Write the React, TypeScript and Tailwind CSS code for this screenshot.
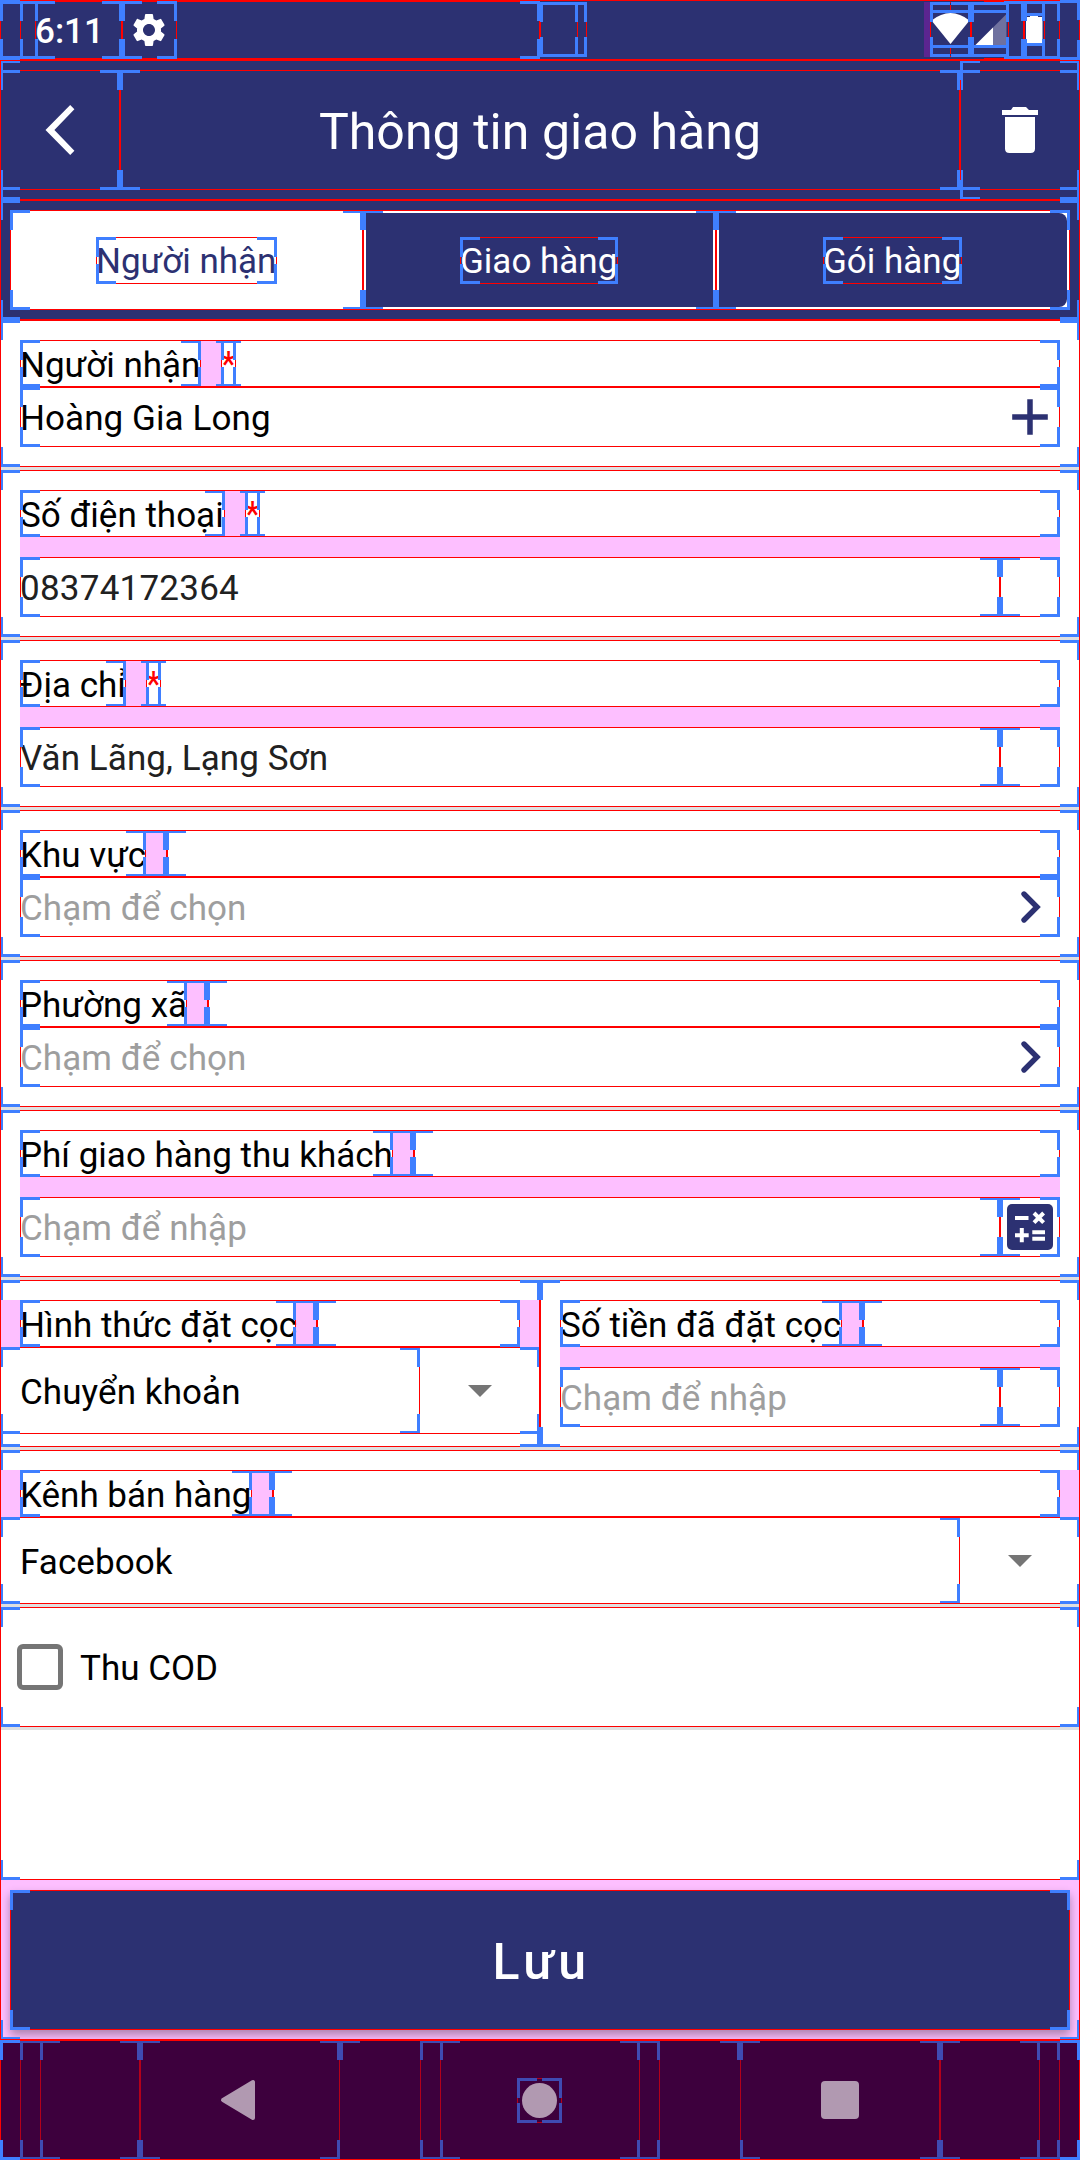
import React from "react";

type Tone = "bright" | "dim";

/** Debug outline: a hairline frame with heavy corner brackets. */
function Outline({ tone = "bright" }: { tone?: Tone }) {
  const c = tone === "bright" ? "border-[#3f7fff]" : "border-[#3f4bb2]";
  const r = tone === "bright" ? "border-[#ff0000]" : "border-[#b3001a]";
  return (
    <span className="pointer-events-none absolute inset-0">
      <span className={`absolute inset-0 border ${r}`} />
      <span className={`absolute left-0 top-0 h-5 w-5 border-l-3 border-t-3 ${c}`} />
      <span className={`absolute right-0 top-0 h-5 w-5 border-r-3 border-t-3 ${c}`} />
      <span className={`absolute bottom-0 left-0 h-5 w-5 border-b-3 border-l-3 ${c}`} />
      <span className={`absolute bottom-0 right-0 h-5 w-5 border-b-3 border-r-3 ${c}`} />
    </span>
  );
}

function Box({ className = "", tone, children }: { className?: string; tone?: Tone; children?: React.ReactNode }) {
  return (
    <div className={`relative ${className}`}>
      {children}
      <Outline tone={tone} />
    </div>
  );
}

function Divider() {
  return <div className="h-[3px] w-full shrink-0 bg-[#dfdfdf]" />;
}

function Label({ text, width, required }: { text: string; width: string; required?: boolean }) {
  return (
    <Box className="flex h-[47px] grow">
      <Box className={`h-[47px] shrink-0 whitespace-nowrap pt-0.5 leading-[47px] ${width}`}>{text}</Box>
      <div className="h-[47px] w-5 bg-[#fdbfff]" />
      <Box className={`h-[47px] leading-[49px] text-[#ff0000] ${required ? "w-[15px]" : "w-0"}`}>{required ? "*" : ""}</Box>
    </Box>
  );
}

function Chevron() {
  return (
    <svg className="h-[60px] w-[60px]" viewBox="0 0 60 60" fill="none" stroke="#2c3172" strokeWidth="5.4">
      <path d="M24 17 L37 30 L24 43" strokeLinecap="round" />
    </svg>
  );
}

function Plus() {
  return (
    <svg className="h-[60px] w-[60px]" viewBox="0 0 60 60" stroke="#2c3172" strokeWidth="5.5">
      <path d="M12.200 30 H47.800 M30 12.200 V47.800" />
    </svg>
  );
}

function Calculator() {
  return (
    <svg className="h-[60px] w-[60px]" viewBox="0 0 60 60">
      <rect x="7" y="7" width="46" height="46" rx="5" fill="#2c3172" />
      <path
        d="M15 21 H28.500 M15 38.200 H28.700 M21.800 31 V45.200 M32.300 35.200 H45 M32.300 41.700 H45 M34 16 L43.600 25.600 M43.600 16 L34 25.600"
        stroke="#fff"
        strokeWidth="4"
      />
    </svg>
  );
}

function PickerRow({ label, width, required, value, placeholder, icon }: { label: string; width: string; required?: boolean; value?: string; placeholder?: string; icon: React.ReactNode }) {
  return (
    <Box className="h-[147px] p-5">
      <div className="flex">
        <Label text={label} width={width} required={required} />
      </div>
      <Box className="flex h-[60px] items-center justify-between">
        <span className={`pt-0.5 tracking-[0.08px] ${value ? "text-black" : "text-[#9e9e9e]"}`}>{value ?? placeholder}</span>
        {icon}
      </Box>
    </Box>
  );
}

function InputRow({ label, width, required, value, placeholder, icon, spacing = "tracking-[0.08px]" }: { label: string; width: string; required?: boolean; value?: string; placeholder?: string; icon?: React.ReactNode; spacing?: string }) {
  return (
    <Box className="h-[167px] grow p-5">
      <div className="flex">
        <Label text={label} width={width} required={required} />
      </div>
      <div className="h-5 bg-[#fdbfff]" />
      <Box className="flex h-[60px]">
        <Box className={`flex h-[60px] grow items-center pt-0.5 ${spacing} ${value ? "text-[#212121]" : "text-[#9e9e9e]"}`}>{value ?? placeholder}</Box>
        <Box className="h-[60px] w-[60px]">{icon}</Box>
      </Box>
    </Box>
  );
}

function Spinner({ label, width, value }: { label: string; width: string; value: string }) {
  return (
    <>
      <div className="flex pt-5">
        <div className="w-5 bg-[#fdbfff]" />
        <Label text={label} width={width} />
        <div className="w-5 bg-[#fdbfff]" />
      </div>
      <Box className="flex h-[87px]">
        <Box className="flex grow items-center pl-5 pt-[3px] tracking-[0.08px]">{value}</Box>
        <div className="flex w-[120px] items-center justify-center">
          <svg className="h-3 w-6" viewBox="0 0 24 12">
            <path d="M0 0 H24 L12 12 Z" fill="#757575" />
          </svg>
        </div>
      </Box>
    </>
  );
}

function StatusBar() {
  return (
    <div className="relative flex h-[60px] shrink-0 items-center bg-[#2c3172]">
      <div className="w-[35px]" />
      <div className="w-[87px] pt-0.5 font-medium text-white">6:11</div>
      <svg className="ml-[7px] h-10 w-10" viewBox="0 0 24 24" fill="#fff">
        <path d="M19.14 12.94c.04-.3.06-.61.06-.94 0-.32-.02-.64-.07-.94l2.03-1.58a.49.49 0 0 0 .12-.61l-1.92-3.32a.488.488 0 0 0-.59-.22l-2.39.96c-.5-.38-1.03-.7-1.62-.94l-.36-2.54a.484.484 0 0 0-.48-.41h-3.84c-.24 0-.43.17-.47.41l-.36 2.54c-.59.24-1.13.57-1.62.94l-2.39-.96c-.22-.08-.47 0-.59.22L2.74 8.87c-.12.21-.08.47.12.61l2.03 1.58c-.05.3-.09.63-.09.94s.02.64.07.94l-2.03 1.58a.49.49 0 0 0-.12.61l1.92 3.32c.12.22.37.29.59.22l2.39-.96c.5.38 1.03.7 1.62.94l.36 2.54c.05.24.24.41.48.41h3.84c.24 0 .44-.17.47-.41l.36-2.54c.59-.24 1.13-.56 1.62-.94l2.39.96c.22.08.47 0 .59-.22l1.92-3.32c.12-.22.07-.47-.12-.61l-2.01-1.58zM12 15.6c-1.98 0-3.6-1.62-3.6-3.6s1.62-3.6 3.600-3.600 3.600 1.620 3.600 3.600-1.620 3.600-3.600 3.600z" />
      </svg>
      <div className="grow" />
      <div className="mt-[-1px] h-[55px] w-[6px] bg-[#5b2590]" />
      <svg className="h-[60px] w-[150px]" viewBox="930 0 150 60">
        <path d="M931.500 20.500 Q941 13 950.500 13 Q960 13 969.500 20.500 L950.500 44 Z" fill="#fff" />
        <path d="M975.500 45 L1006.500 14 V45 Z" fill="#6f719f" />
        <path d="M975.500 45 L993 27.500 V45 Z" fill="#fff" />
        <path d="M1026 17 H1030 V15 H1038 V17 H1042.500 V44 H1026 Z" fill="#fff" />
      </svg>

      <span className="absolute inset-0"><Outline /></span>
      <span className="absolute inset-x-0 bottom-px top-px">
        <span className="absolute inset-y-0 left-0 w-[540px]"><Outline /></span>
        <span className="absolute inset-y-0 left-5 w-5 overflow-hidden"><span className="absolute inset-y-0 left-0 w-20"><Outline /></span></span>
        <span className="absolute inset-y-0 left-[35px] w-[87px]"><Outline /></span>
        <span className="absolute inset-y-0 left-[122px] w-[55px]"><Outline /></span>
        <span className="absolute inset-y-0 left-[984px] w-10 overflow-hidden"><span className="absolute inset-y-0 right-0 w-20"><Outline /></span></span>
        <span className="absolute inset-y-0 left-[1024px] w-[21px]"><Outline /></span>
        <span className="absolute inset-y-0 left-[1040px] w-5 overflow-hidden"><span className="absolute inset-y-0 right-0 w-20"><Outline /></span></span>
      </span>
      <span className="absolute left-[540px] top-0.5 h-[55px] w-[47px]"><Outline /></span>
      <span className="absolute left-[540px] top-0.5 h-[55px] w-[38px]"><Outline /></span>
      <span className="absolute left-[950px] top-[5px] h-[5px] w-px bg-[#ff0000]" />
      <span className="absolute left-[950px] top-12 h-1.5 w-px bg-[#ff0000]" />
      <span className="absolute left-[930px] top-0.5 h-[55px] w-[41px]"><Outline /></span>
      <span className="absolute left-[971px] top-0.5 h-[55px] w-[38px]"><Outline /></span>
      <span className="absolute left-[933px] top-2.5 h-[38px] w-[73px] border-y-3 border-[#3f7fff]" />
      <span className="absolute left-[1026px] top-[13px] h-[33px] w-4 border-y-3 border-[#3f7fff]" />
    </div>
  );
}

function Header() {
  return (
    <Box className="flex h-[140px] shrink-0 items-center bg-[#2c3172] text-[50px] text-white">
      <Box className="flex h-[120px] w-[120px] items-center">
        <svg className="h-[120px] w-[120px]" viewBox="0 70 120 120">
          <path d="M70.200 105 L74.400 109.300 L54.400 130 L74.400 150.700 L70.200 155 L45.500 130 Z" fill="#fff" />
        </svg>
      </Box>
      <Box className="flex h-[120px] grow items-center justify-center pt-1 tracking-[0.05px]">Thông tin giao hàng</Box>
      <Box className="flex h-[140px] w-[120px] items-center">
        <svg className="h-[120px] w-[120px]" viewBox="960 70 120 120" fill="#fff">
          <path d="M1002 110 H1011 L1013 107 H1026 L1029 110 H1038 V115 H1002 Z" />
          <path d="M1005 117 H1035 V148.500 Q1035 153 1030.500 153 H1009.500 Q1005 153 1005 148.500 Z" />
        </svg>
        <span className="absolute inset-x-0 inset-y-2.5"><Outline /></span>
      </Box>
    </Box>
  );
}

function Tabs() {
  return (
    <Box className="h-[120px] shrink-0 bg-[#2c3172] p-2.5">
      <Box className="flex h-[100px]">
        <Box className="flex w-[353px] items-center justify-center bg-white text-[#2c3172]">
          <Box className="h-[47px] w-[181px] whitespace-nowrap leading-[49px]">Người nhận</Box>
        </Box>
        <Box className="flex w-[353px] bg-white p-[3px] text-white">
          <div className="flex grow items-center justify-center bg-[#2c3172] pr-px">
            <Box className="h-[47px] w-[158px] whitespace-nowrap leading-[49px]">Giao hàng</Box>
          </div>
        </Box>
        <Box className="flex w-[354px] bg-white p-[3px] text-white">
          <div className="flex grow items-center justify-center rounded-r-[8px] bg-[#2c3172] pr-px">
            <Box className="h-[47px] w-[139px] whitespace-nowrap leading-[49px]">Gói hàng</Box>
          </div>
        </Box>
      </Box>
    </Box>
  );
}

function NavBar() {
  return (
    <div className="relative flex h-[120px] shrink-0 bg-[#3d003d] px-5">
      <div className="w-5" />
      <Box tone="dim" className="w-[100px]" />
      <Box tone="dim" className="flex w-[200px] items-center justify-center pr-[5px]">
        <svg className="h-[42px] w-9" viewBox="0 0 36 42">
          <path d="M3 21 L33 3 V39 Z" fill="#b199b1" stroke="#b199b1" strokeWidth="4" strokeLinejoin="round" />
        </svg>
      </Box>
      <div className="w-20" />
      <Box tone="dim" className="flex w-60 justify-center">
        <Box tone="dim" className="flex w-[200px] items-center justify-center pr-px">
          <Box tone="dim" className="flex h-[45px] w-[45px] items-center justify-center">
            <div className="h-[35px] w-[35px] rounded-full bg-[#b199b1]" />
          </Box>
        </Box>
      </Box>
      <div className="w-20" />
      <Box tone="dim" className="flex w-[200px] items-center justify-center">
        <div className="h-[38px] w-[38px] rounded-[4px] bg-[#b199b1]" />
      </Box>
      <Box tone="dim" className="w-[100px]" />
      <span className="absolute inset-y-0 left-5 right-5"><Outline tone="dim" /></span>
      <span className="absolute left-[340px] top-0 h-5 w-5 border-l-3 border-t-3 border-[#3f4bb2]" />
      <span className="absolute left-[720px] top-0 h-5 w-5 border-r-3 border-t-3 border-[#3f4bb2]" />
      <Outline />
    </div>
  );
}

export default function App() {
  return (
    <div className="relative flex h-[2160px] w-[1080px] flex-col overflow-hidden bg-white font-['Roboto',sans-serif] text-[35px] leading-[41px] text-black">
      <StatusBar />
      <Header />
      <Tabs />
      <Box className="flex h-[1560px] shrink-0 flex-col">
        <PickerRow label="Người nhận" width="w-[181px]" required value="Hoàng Gia Long" icon={<Plus />} />
        <Divider />
        <div className="flex"><InputRow label="Số điện thoại" width="w-[205px]" required value="08374172364" spacing="tracking-[0.24px]" /></div>
        <Divider />
        <div className="flex"><InputRow label="Địa chỉ" width="w-[106px]" required value="Văn Lãng, Lạng Sơn" /></div>
        <Divider />
        <PickerRow label="Khu vực" width="w-[126px]" placeholder="Chạm để chọn" icon={<Chevron />} />
        <Divider />
        <PickerRow label="Phường xã" width="w-[167px]" placeholder="Chạm để chọn" icon={<Chevron />} />
        <Divider />
        <div className="flex"><InputRow label="Phí giao hàng thu khách" width="w-[373px]" placeholder="Chạm để nhập" icon={<Calculator />} /></div>
        <Divider />
        <div className="flex h-[167px]">
          <Box className="w-[540px]">
            <Spinner label="Hình thức đặt cọc" width="w-[276px]" value="Chuyển khoản" />
          </Box>
          <InputRow label="Số tiền đã đặt cọc" width="w-[282px]" placeholder="Chạm để nhập" />
        </div>
        <Divider />
        <Box className="h-[154px]">
          <Spinner label="Kênh bán hàng" width="w-[232px]" value="Facebook" />
        </Box>
        <Divider />
        <Box className="flex h-[120px] items-center pl-[17px]">
          <div className="h-[46px] w-[46px] rounded-[6px] border-5 border-[#757575]" />
          <span className="pl-[17px] pt-0.5">Thu COD</span>
        </Box>
        <Divider />
      </Box>
      <div className="relative h-40 shrink-0 overflow-hidden bg-[#fdbfff] p-2.5">
        <Box className="flex h-[140px] items-center justify-center bg-[#2c3172] pl-[3px] pt-1 text-[50px] font-medium tracking-[4.45px] text-white shadow-[0_5px_9px_rgba(0,0,0,0.32)]">
          Lưu
        </Box>
      </div>
      <NavBar />
      <span className="pointer-events-none absolute inset-x-0 top-[60px] h-[1980px]">
        <Outline />
        <span className="absolute inset-0 border border-[#ff0000]" />
      </span>
    </div>
  );
}
